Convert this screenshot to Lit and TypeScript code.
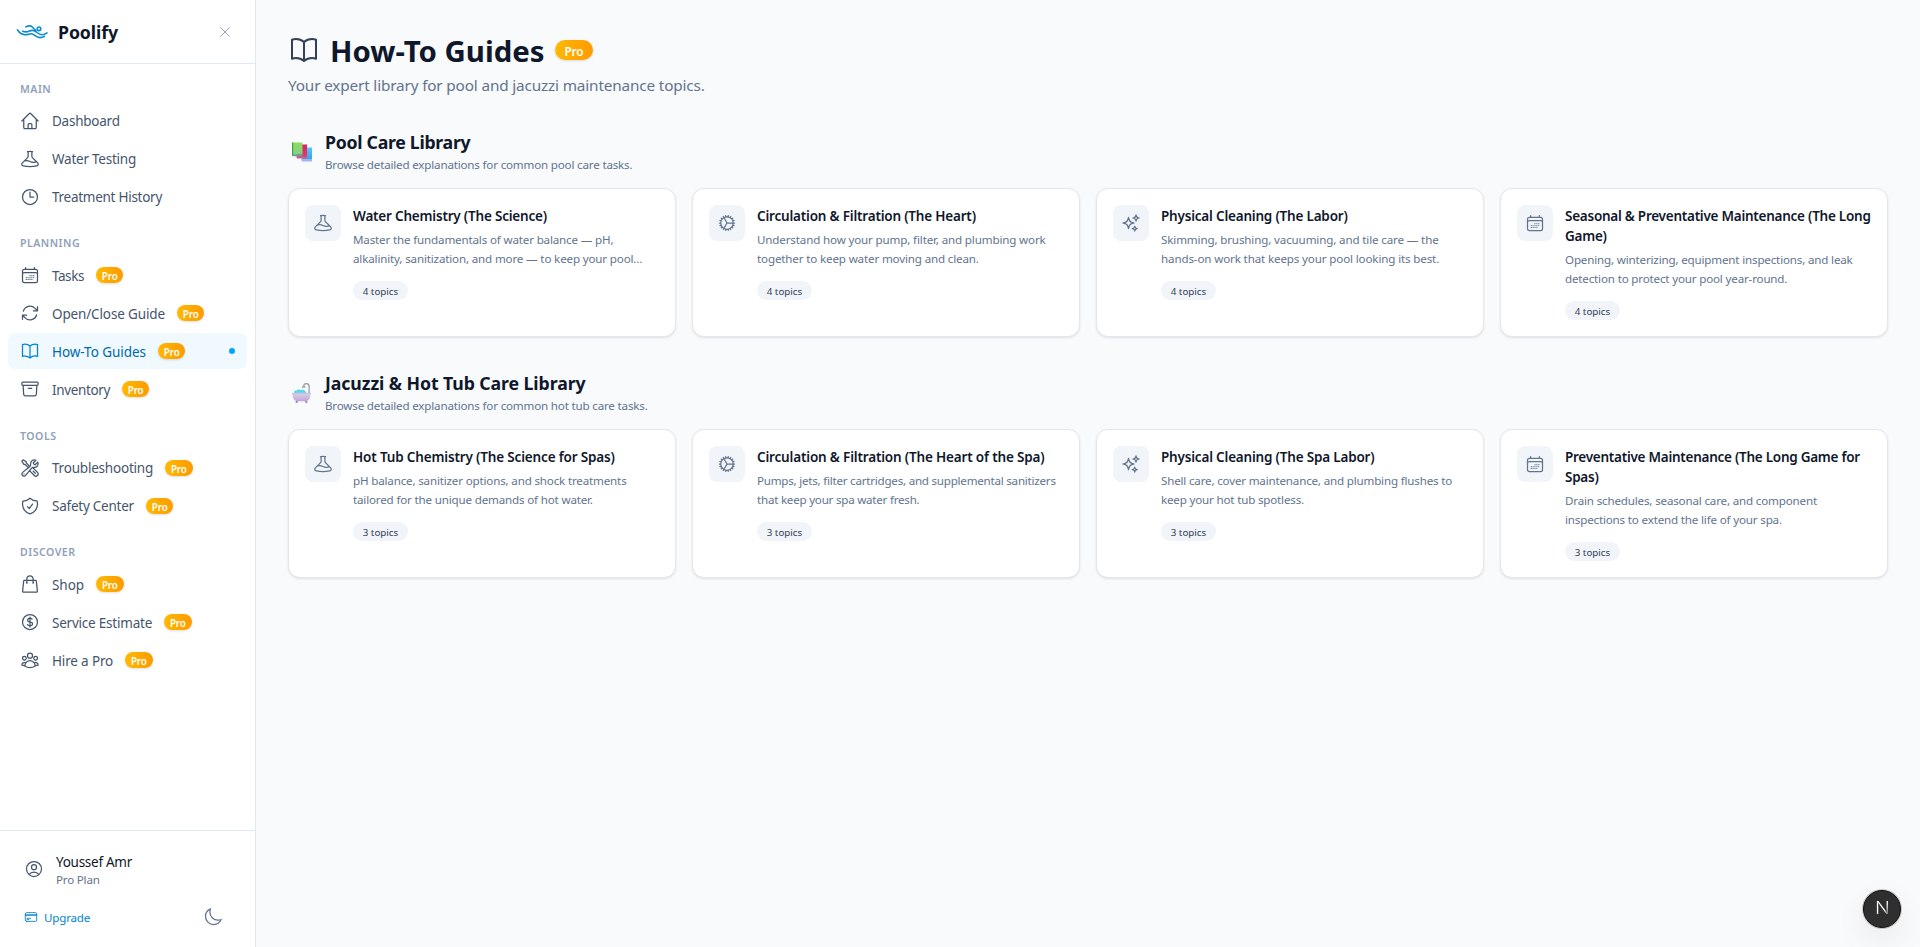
import { LitElement, html, svg, css, nothing } from "lit";
import { customElement, property } from "lit/decorators.js";

const ICONS: Record<string, string> = {
  home: "m2.25 12 8.954-8.955c.44-.439 1.152-.439 1.591 0L21.75 12M4.5 9.75v10.125c0 .621.504 1.125 1.125 1.125H9.75v-4.875c0-.621.504-1.125 1.125-1.125h2.25c.621 0 1.125.504 1.125 1.125V21h4.125c.621 0 1.125-.504 1.125-1.125V9.75M8.25 21h8.25",
  beaker: "M9.75 3.104v5.714a2.25 2.25 0 0 1-.659 1.591L5 14.5M9.75 3.104c-.251.023-.501.05-.75.082m.75-.082a24.301 24.301 0 0 1 4.5 0m0 0v5.714c0 .597.237 1.17.659 1.591L19.8 15.3M14.25 3.104c.251.023.501.05.75.082M19.8 15.3l-1.57.393A9.065 9.065 0 0 1 12 15a9.065 9.065 0 0 0-6.23-.693L5 14.5m14.8.8 1.402 1.402c1.232 1.232.65 3.318-1.067 3.611A48.309 48.309 0 0 1 12 21c-2.773 0-5.491-.235-8.135-.687-1.718-.293-2.3-2.379-1.067-3.61L5 14.5",
  clock: "M12 6v6h4.5m4.5 0a9 9 0 1 1-18 0 9 9 0 0 1 18 0Z",
  calendar: "M6.75 3v2.25M17.25 3v2.25M3 18.75V7.5a2.25 2.25 0 0 1 2.25-2.25h13.5A2.25 2.25 0 0 1 21 7.5v11.25m-18 0A2.25 2.25 0 0 0 5.25 21h13.5A2.25 2.25 0 0 0 21 18.75m-18 0v-7.5A2.25 2.25 0 0 1 5.25 9h13.5A2.25 2.25 0 0 1 21 11.25v7.5m-9-6h.008v.008H12v-.008ZM12 15h.008v.008H12V15Zm0 2.25h.008v.008H12v-.008ZM9.75 15h.008v.008H9.75V15Zm0 2.25h.008v.008H9.75v-.008ZM7.5 15h.008v.008H7.5V15Zm0 2.25h.008v.008H7.5v-.008Zm6.75-4.5h.008v.008h-.008v-.008Zm0 2.25h.008v.008h-.008V15Zm0 2.25h.008v.008h-.008v-.008Zm2.25-4.5h.008v.008H16.5v-.008Zm0 2.25h.008v.008H16.5V15Z",
  refresh: "M16.023 9.348h4.992v-.001M2.985 19.644v-4.992m0 0h4.992m-4.993 0 3.181 3.183a8.25 8.25 0 0 0 13.803-3.7M4.031 9.865a8.25 8.25 0 0 1 13.803-3.7l3.181 3.182m0-4.991v4.99",
  book: "M12 6.042A8.967 8.967 0 0 0 6 3.75c-1.052 0-2.062.18-3 .512v14.25A8.987 8.987 0 0 1 6 18c2.305 0 4.408.867 6 2.292m0-14.25a8.966 8.966 0 0 1 6-2.292c1.052 0 2.062.18 3 .512v14.25A8.987 8.987 0 0 0 18 18a8.967 8.967 0 0 0-6 2.292m0-14.25v14.25",
  archive: "m20.25 7.5-.625 10.632a2.25 2.25 0 0 1-2.247 2.118H6.622a2.25 2.25 0 0 1-2.247-2.118L3.75 7.5M10 11.25h4M3.375 7.5h17.25c.621 0 1.125-.504 1.125-1.125v-1.5c0-.621-.504-1.125-1.125-1.125H3.375c-.621 0-1.125.504-1.125 1.125v1.5c0 .621.504 1.125 1.125 1.125Z",
  tools: "M11.42 15.17 17.25 21A2.652 2.652 0 0 0 21 17.25l-5.877-5.877M11.42 15.17l2.496-3.03c.317-.384.74-.626 1.208-.766M11.42 15.17l-4.655 5.653a2.548 2.548 0 1 1-3.586-3.586l6.837-5.63m5.108-.233c.55-.164 1.163-.188 1.743-.14a4.5 4.5 0 0 0 4.486-6.336l-3.276 3.277a3.004 3.004 0 0 1-2.25-2.25l3.276-3.276a4.5 4.5 0 0 0-6.336 4.486c.091 1.076-.071 2.264-.904 2.95l-.102.085m-1.745 1.437L5.909 7.5H4.5L2.25 3.75l1.5-1.5L7.5 4.5v1.409l4.26 4.26m-1.745 1.437 1.745-1.437m6.615 8.206L15.75 15.75M4.867 19.125h.008v.008h-.008v-.008Z",
  shield: "M9 12.75 11.25 15 15 9.75m-3-7.036A11.959 11.959 0 0 1 3.598 6 11.99 11.99 0 0 0 3 9.749c0 5.592 3.824 10.29 9 11.623 5.176-1.332 9-6.03 9-11.622 0-1.31-.21-2.571-.598-3.751h-.152c-3.196 0-6.1-1.248-8.25-3.285Z",
  bag: "M15.75 10.5V6a3.75 3.75 0 1 0-7.5 0v4.5m11.356-1.993 1.263 12c.07.665-.45 1.243-1.119 1.243H4.25a1.125 1.125 0 0 1-1.12-1.243l1.264-12A1.125 1.125 0 0 1 5.513 7.5h12.974c.576 0 1.059.435 1.119 1.007ZM8.625 10.5a.375.375 0 1 1-.75 0 .375.375 0 0 1 .75 0Zm7.5 0a.375.375 0 1 1-.75 0 .375.375 0 0 1 .75 0Z",
  dollar: "M12 6v12m-3-2.818.879.659c1.171.879 3.07.879 4.242 0 1.172-.879 1.172-2.303 0-3.182C13.536 12.219 12.768 12 12 12c-.725 0-1.45-.22-2.003-.659-1.106-.879-1.106-2.303 0-3.182s2.9-.879 4.006 0l.415.33M21 12a9 9 0 1 1-18 0 9 9 0 0 1 18 0Z",
  group: "M18 18.72a9.094 9.094 0 0 0 3.741-.479 3 3 0 0 0-4.682-2.72m.94 3.198.001.031c0 .225-.012.447-.037.666A11.944 11.944 0 0 1 12 21c-2.17 0-4.207-.576-5.963-1.584A6.062 6.062 0 0 1 6 18.719m12 0a5.971 5.971 0 0 0-.941-3.197m0 0A5.995 5.995 0 0 0 12 12.75a5.995 5.995 0 0 0-5.058 2.772m0 0a3 3 0 0 0-4.681 2.72 8.986 8.986 0 0 0 3.74.477m.94-3.197a5.971 5.971 0 0 0-.94 3.197M15 6.75a3 3 0 1 1-6 0 3 3 0 0 1 6 0Zm6 3a2.25 2.25 0 1 1-4.5 0 2.25 2.25 0 0 1 4.5 0Zm-13.5 0a2.25 2.25 0 1 1-4.5 0 2.25 2.25 0 0 1 4.5 0Z",
  user: "M17.982 18.725A7.488 7.488 0 0 0 12 15.75a7.488 7.488 0 0 0-5.982 2.975m11.963 0a9 9 0 1 0-11.963 0m11.963 0A8.966 8.966 0 0 1 12 21a8.966 8.966 0 0 1-5.982-2.275M15 9.75a3 3 0 1 1-6 0 3 3 0 0 1 6 0Z",
  card: "M2.25 8.25h19.5M2.25 9h19.5m-16.5 5.25h6m-6 2.25h3m-3.75 3h15a2.25 2.25 0 0 0 2.25-2.25V6.75A2.25 2.25 0 0 0 19.5 4.5h-15a2.25 2.25 0 0 0-2.25 2.25v10.5A2.25 2.25 0 0 0 4.5 19.5Z",
  moon: "M21.752 15.002A9.72 9.72 0 0 1 18 15.75c-5.385 0-9.75-4.365-9.75-9.75 0-1.33.266-2.597.748-3.752A9.753 9.753 0 0 0 3 11.25C3 16.635 7.365 21 12.75 21a9.753 9.753 0 0 0 9.002-5.998Z",
  close: "M6 18 18 6M6 6l12 12",
  cog: "M4.5 12a7.5 7.5 0 0 0 15 0m-15 0a7.5 7.5 0 1 1 15 0m-15 0H3m16.5 0H21m-1.5 0H12m-8.457 3.077 1.41-.513m14.095-5.13 1.41-.513M5.106 17.785l1.15-.964m11.49-9.642 1.149-.964M7.501 19.795l.75-1.3m7.5-12.99.75-1.3m-6.063 16.658.26-1.477m2.605-14.772.26-1.477m0 17.726-.26-1.477M10.698 4.614l-.26-1.477M16.5 19.794l-.75-1.299M7.5 4.205 12 12m6.894 5.785-1.149-.964M6.256 7.178l-1.15-.964m15.352 8.864-1.41-.513M4.954 9.435l-1.41-.514M12.002 12l-3.75 6.495",
  sparkles: "M9.813 15.904 9 18.75l-.813-2.846a4.5 4.5 0 0 0-3.09-3.09L2.25 12l2.846-.813a4.5 4.5 0 0 0 3.09-3.09L9 5.25l.813 2.846a4.5 4.5 0 0 0 3.09 3.09L15.75 12l-2.846.813a4.5 4.5 0 0 0-3.09 3.09ZM18.259 8.715 18 9.75l-.259-1.035a3.375 3.375 0 0 0-2.455-2.456L14.25 6l1.036-.259a3.375 3.375 0 0 0 2.455-2.456L18 2.25l.259 1.035a3.375 3.375 0 0 0 2.456 2.456L21.75 6l-1.035.259a3.375 3.375 0 0 0-2.456 2.456ZM16.894 20.567 16.5 21.75l-.394-1.183a2.25 2.25 0 0 0-1.423-1.423L13.5 18.75l1.183-.394a2.25 2.25 0 0 0 1.423-1.423l.394-1.183.394 1.183a2.25 2.25 0 0 0 1.423 1.423l1.183.394-1.183.394a2.25 2.25 0 0 0-1.423 1.423Z",
};

/** Letter-spacing, in px, carried by a piece of text. */
const track = (px: number) => `letter-spacing:${px}px`;

@customElement("ui-icon")
class UiIcon extends LitElement {
  @property() name = "home";
  static styles = css`
    :host { display: block; flex: none; width: 20px; height: 20px; }
    svg { display: block; width: 100%; height: 100%; fill: none; stroke: currentColor; stroke-width: var(--icon-stroke, 1.5); stroke-linecap: round; stroke-linejoin: round; }
  `;
  render() {
    return html`<svg viewBox="0 0 24 24">${svg`<path d=${ICONS[this.name]} />`}</svg>`;
  }
}

@customElement("pro-badge")
class ProBadge extends LitElement {
  static styles = css`
    :host {
      display: flex; align-items: center; justify-content: center; flex: none;
      width: 27.5px; height: 16px; border-radius: 999px;
      background: linear-gradient(90deg, #ffb900, #fe9a00);
      box-shadow: 0 1px 3px rgb(0 0 0 / 0.1), 0 1px 2px -1px rgb(0 0 0 / 0.1);
      color: #fff; font-weight: 600; font-size: 9.9px; letter-spacing: -0.15px; line-height: 12px;
    }
    span { padding-top: 2px; }
    :host([large]) { width: 38px; height: 20px; font-size: 11.8px; line-height: 16px; }
  `;
  render() {
    return html`<span>Pro</span>`;
  }
}

type NavItem = [icon: string, text: string, tracking: number];
const NAV: { label: string; pro?: boolean; items: NavItem[] }[] = [
  { label: "MAIN", items: [["home", "Dashboard", -0.24], ["beaker", "Water Testing", -0.24], ["clock", "Treatment History", -0.27]] },
  { label: "PLANNING", pro: true, items: [["calendar", "Tasks", -0.44], ["refresh", "Open/Close Guide", -0.14], ["book", "How-To Guides", -0.05], ["archive", "Inventory", -0.37]] },
  { label: "TOOLS", pro: true, items: [["tools", "Troubleshooting", -0.21], ["shield", "Safety Center", -0.24]] },
  { label: "DISCOVER", pro: true, items: [["bag", "Shop", -0.05], ["dollar", "Service Estimate", -0.22], ["group", "Hire a Pro", -0.16]] },
];

@customElement("app-sidebar")
class AppSidebar extends LitElement {
  static styles = css`
    :host { display: flex; flex-direction: column; flex: none; box-sizing: border-box; width: 256px; height: 100%; background: #fff; border-right: 1px solid #e2e8f0; }
    .head { display: flex; align-items: center; box-sizing: border-box; height: 64px; padding: 0 20px 0 16px; border-bottom: 1px solid #e2e8f0; }
    .logo { width: 32px; height: 32px; flex: none; }
    .brand { flex: 1; padding: 1px 0 0 10px; font-weight: 700; font-size: 17.7px; line-height: 28px; letter-spacing: -0.1px; color: #0f172b; }
    .close { display: grid; place-items: center; width: 20px; height: 20px; color: #90a1b9; --icon-stroke: 1.3; }
    .close ui-icon { width: 18px; height: 18px; }
    nav { flex: 1; display: flex; flex-direction: column; gap: 20px; padding: 16px 8px; }
    .label { margin: 0 12px 5.25px; padding-top: 0.75px; font-size: 10.6px; line-height: 16.5px; font-weight: 600; letter-spacing: 0.48px; color: #90a1b9; }
    .items { display: flex; flex-direction: column; gap: 2px; }
    .item { display: flex; align-items: center; gap: 12px; height: 36px; box-sizing: border-box; padding: 0 12px; border-radius: 8px; color: #45556c; font-size: 13.5px; line-height: 20px; }
    .text { padding-top: 1.5px; }
    .item.active { background: #f0f9ff; color: #0069a8; }
    .item.active ui-icon { color: #0084d1; }
    .dot { margin-left: auto; width: 6px; height: 6px; border-radius: 50%; background: #00a6f4; }
    .foot { border-top: 1px solid #e2e8f0; height: 117px; box-sizing: border-box; padding: 16px; }
    .user { display: flex; align-items: center; gap: 12px; box-sizing: border-box; padding: 2px 8px 0; height: 44px; color: #45556c; }
    .user ui-icon { margin-bottom: 2px; }
    .name { font-size: 13.5px; line-height: 20px; letter-spacing: -0.27px; color: #0f172b; }
    .plan { font-size: 11.6px; line-height: 16px; letter-spacing: -0.2px; color: #62748e; }
    .row { display: flex; align-items: center; gap: 6px; padding: 0 16px 0 8px; margin-top: 8px; height: 36px; }
    .row .up { width: 14px; height: 14px; color: #0084d1; }
    .upgrade { flex: 1; padding-top: 2px; font-size: 11.6px; line-height: 16px; letter-spacing: -0.2px; color: #0084d1; }
    .row .moon { color: #62748e; }
  `;
  render() {
    return html`
      <div class="head">
        <svg class="logo" viewBox="0 0 32 32" fill="none" stroke="#0a8ccf" stroke-width="1.6" stroke-linecap="round">
          <path d="M1.4 13.8C3.5 17 6 18.900 9.500 18.800 12 18.700 13.500 17.700 15.500 17.800 18.500 17.900 19.500 21.600 24 21.600c2 0 3.300-.500 4.500-1.300" />
          <path d="M6.800 15.200C9 16.300 11 16.200 13.500 15c3.300-1.500 5.500-.500 7.500 1.500 3 2.800 7 2.500 10 .400" />
          <path d="M9.700 10.900C12 9.800 14.500 9.300 16.300 11L20 14.700" />
          <circle cx="23" cy="12.800" r="1.800" />
        </svg>
        <span class="brand">Poolify</span>
        <div class="close"><ui-icon name="close"></ui-icon></div>
      </div>
      <nav>
        ${NAV.map((g) => html`<section>
          <div class="label">${g.label}</div>
          <div class="items">
            ${g.items.map(([icon, text, t]) => html`<div class="item ${icon === "book" ? "active" : ""}">
              <ui-icon name=${icon}></ui-icon><span class="text" style=${track(t)}>${text}</span>
              ${g.pro ? html`<pro-badge></pro-badge>` : nothing}
              ${icon === "book" ? html`<span class="dot"></span>` : nothing}
            </div>`)}
          </div>
        </section>`)}
      </nav>
      <div class="foot">
        <div class="user"><ui-icon name="user"></ui-icon><div><div class="name">Youssef Amr</div><div class="plan">Pro Plan</div></div></div>
        <div class="row"><ui-icon class="up" name="card"></ui-icon><span class="upgrade">Upgrade</span><ui-icon class="moon" name="moon"></ui-icon></div>
      </div>`;
  }
}

interface Guide { icon: string; heading: string; text: string; ht: number; tt: number }

@customElement("guide-card")
class GuideCard extends LitElement {
  @property({ attribute: false }) guide!: Guide;
  @property() topics = "";
  static styles = css`
    :host { display: flex; gap: 12px; box-sizing: border-box; padding: 16px; border: 1px solid #e2e8f0; border-radius: 12px; background: #fff; box-shadow: 0 1px 3px rgb(0 0 0 / 0.08), 0 1px 2px -1px rgb(0 0 0 / 0.08); }
    .tile { flex: none; display: grid; place-items: center; width: 36px; height: 36px; border-radius: 8px; background: #f1f5f9; color: #62748e; }
    .body { flex: 1; min-width: 0; }
    h3 { margin: 0 0 4px; padding-top: 1px; font-size: 13.5px; line-height: 20px; font-weight: 600; color: #0f172b; }
    p { margin: 0 0 12.5px; font-size: 11.6px; line-height: 19.25px; color: #62748e; }
    .pill { display: flex; align-items: center; justify-content: center; box-sizing: border-box; width: 55px; height: 19px; padding-top: 2px; border-radius: 999px; background: #f1f5f9; color: #314158; font-size: 9.8px; line-height: 17px; font-weight: 400; }
  `;
  render() {
    const g = this.guide;
    return html`<div class="tile"><ui-icon name=${g.icon}></ui-icon></div>
      <div class="body">
        <h3 style=${track(g.ht)}>${g.heading}</h3>
        <p style=${track(g.tt)}>${g.text}</p>
        <div class="pill">${this.topics}</div>
      </div>`;
  }
}

const POOL: Guide[] = [
  { icon: "beaker", heading: "Water Chemistry (The Science)", ht: -0.2, tt: -0.16, text: "Master the fundamentals of water balance — pH, alkalinity, sanitization, and more — to keep your pool…" },
  { icon: "cog", heading: "Circulation & Filtration (The Heart)", ht: -0.195, tt: -0.15, text: "Understand how your pump, filter, and plumbing work together to keep water moving and clean." },
  { icon: "sparkles", heading: "Physical Cleaning (The Labor)", ht: -0.2, tt: -0.14, text: "Skimming, brushing, vacuuming, and tile care — the hands-on work that keeps your pool looking its best." },
  { icon: "calendar", heading: "Seasonal & Preventative Maintenance (The Long Game)", ht: -0.25, tt: -0.17, text: "Opening, winterizing, equipment inspections, and leak detection to protect your pool year-round." },
];
const SPA: Guide[] = [
  { icon: "beaker", heading: "Hot Tub Chemistry (The Science for Spas)", ht: -0.16, tt: -0.17, text: "pH balance, sanitizer options, and shock treatments tailored for the unique demands of hot water." },
  { icon: "cog", heading: "Circulation & Filtration (The Heart of the Spa)", ht: -0.17, tt: -0.23, text: "Pumps, jets, filter cartridges, and supplemental sanitizers that keep your spa water fresh." },
  { icon: "sparkles", heading: "Physical Cleaning (The Spa Labor)", ht: -0.19, tt: -0.18, text: "Shell care, cover maintenance, and plumbing flushes to keep your hot tub spotless." },
  { icon: "calendar", heading: "Preventative Maintenance (The Long Game for Spas)", ht: -0.26, tt: -0.17, text: "Drain schedules, seasonal care, and component inspections to extend the life of your spa." },
];

const books = svg`
  <defs>
    <linearGradient id="g1" x1="0" y1="0" x2="0" y2="1"><stop offset="0" stop-color="#93dc5c"/><stop offset="1" stop-color="#7bd38a"/></linearGradient>
    <linearGradient id="g2" x1="0" y1="0" x2="0" y2="1"><stop offset="0" stop-color="#d61f6a"/><stop offset="1" stop-color="#ef3a5d"/></linearGradient>
    <linearGradient id="g3" x1="0" y1="0" x2="0" y2="1"><stop offset="0" stop-color="#55c8f5"/><stop offset="1" stop-color="#35a4ee"/></linearGradient>
  </defs>
  <path d="M12 7.500h10v11.500H12z" fill="url(#g3)"/><path d="M11 19h11v2.500H12z" fill="#a7b2f0"/>
  <path d="M7 4.500h10V17H7z" fill="url(#g2)"/><path d="M6 16.500h11v2H7z" fill="#c0609f"/>
  <path d="M2 2.500h10.500v12H2z" fill="url(#g1)"/><path d="M2 2.500h1.200V16H2z" fill="#3fa04a"/><path d="M2.200 14.300h10.300v2H3z" fill="#6f9c8f"/>`;
const tub = svg`
  <defs>
    <linearGradient id="t1" x1="0" y1="0" x2="0" y2="1"><stop offset="0" stop-color="#dcd0e8"/><stop offset="1" stop-color="#bfa2d6"/></linearGradient>
  </defs>
  <g transform="translate(-0.5 -0.2)">
  <path d="M19.600 13V5.500c0-3.700-5.400-3.700-5.400 0" fill="none" stroke="#9b9aa3" stroke-width="1.300"/>
  <path d="M12.500 6.200h3.400" stroke="#9b9aa3" stroke-width="1.500"/>
  <path d="M4.800 12.500c-.8-2.200.8-3.300 2.300-2.600 1.200-1.700 3.300-1.400 4.300-.4 1.800-1 4-.3 4.500 1l1 2z" fill="#4fd8f2"/>
  <path d="M3 13h18c0 4-1.500 7-4.500 7.500h-9C4.500 20 3 17 3 13z" fill="url(#t1)"/>
  <rect x="2.300" y="12" width="19.200" height="1.800" rx="0.900" fill="#cfc3db"/>
  <path d="M6.500 20.300h2l-.700 1.900H6zM15.500 20.300h2l.5 1.900h-1.800z" fill="#9d86b8"/>
  </g>`;

@customElement("app-root")
class AppRoot extends LitElement {
  static styles = css`
    :host { display: flex; height: 947px; width: 1920px; overflow: hidden; position: relative; background: #f8fafc; font-family: "Noto Sans", "Open Sans", sans-serif; }
    main { flex: 1; padding: 32px; box-sizing: border-box; }
    .title { display: flex; align-items: center; height: 36px; }
    .title ui-icon { width: 32px; height: 32px; color: #314158; }
    h1 { margin: 0 10.3px 0 10px; padding-top: 1.6px; font-size: 29.4px; line-height: 36px; font-weight: 700; color: #0f172b; }
    .sub { margin: 4px 0 0; padding-top: 1px; font-size: 15.3px; line-height: 23px; letter-spacing: -0.15px; color: #62748e; }
    .sub span { display: block; padding-top: 0.5px; margin-bottom: -0.5px; }
    section { margin-top: 32px; }
    .sec { display: flex; align-items: flex-start; gap: 11px; margin-bottom: 16px; height: 44px; }
    .emoji { width: 24px; height: 24px; margin: 12px 0 0 2px; }
    h2 { margin: 0; padding-top: 0.25px; font-size: 17.7px; line-height: 28px; font-weight: 700; color: #0f172b; }
    .desc { padding-top: 0.5px; font-size: 11.6px; line-height: 16px; letter-spacing: -0.18px; color: #62748e; }
    .grid { display: grid; grid-template-columns: repeat(4, 1fr); gap: 16px; }
    .dev { position: absolute; left: 1863px; top: 890px; width: 38px; height: 38px; box-sizing: border-box; border-radius: 50%; background: #2f2f2f; border: 1px solid #111; box-shadow: 0 0 0 1px #77777760, 0 12px 32px rgb(0 0 0 / 0.08); display: grid; place-items: center; }
    .dev span { padding-bottom: 1.5px; font-family: Inter, sans-serif; font-size: 17px; font-weight: 300; line-height: 20px; transform: scaleX(1.15); background: linear-gradient(110deg, #fff 60%, #ffffff30 85%); -webkit-background-clip: text; color: transparent; }
  `;
  section(pic: unknown, title: string, tracking: number, desc: string, topics: string, guides: Guide[]) {
    return html`<section>
      <div class="sec">
        <svg class="emoji" viewBox="0 0 24 24">${pic}</svg>
        <div><h2 style=${track(tracking)}>${title}</h2><div class="desc">${desc}</div></div>
      </div>
      <div class="grid">${guides.map((g) => html`<guide-card .guide=${g} topics=${topics}></guide-card>`)}</div>
    </section>`;
  }
  render() {
    return html`<app-sidebar></app-sidebar>
      <main>
        <div class="title"><ui-icon name="book"></ui-icon><h1>How-To Guides</h1><pro-badge large></pro-badge></div>
        <p class="sub"><span>Your expert library for pool and jacuzzi maintenance topics.</span></p>
        ${this.section(books, "Pool Care Library", -0.28, "Browse detailed explanations for common pool care tasks.", "4 topics", POOL)}
        ${this.section(tub, "Jacuzzi & Hot Tub Care Library", -0.08, "Browse detailed explanations for common hot tub care tasks.", "3 topics", SPA)}
      </main>
      <div class="dev"><span>N</span></div>`;
  }
}
